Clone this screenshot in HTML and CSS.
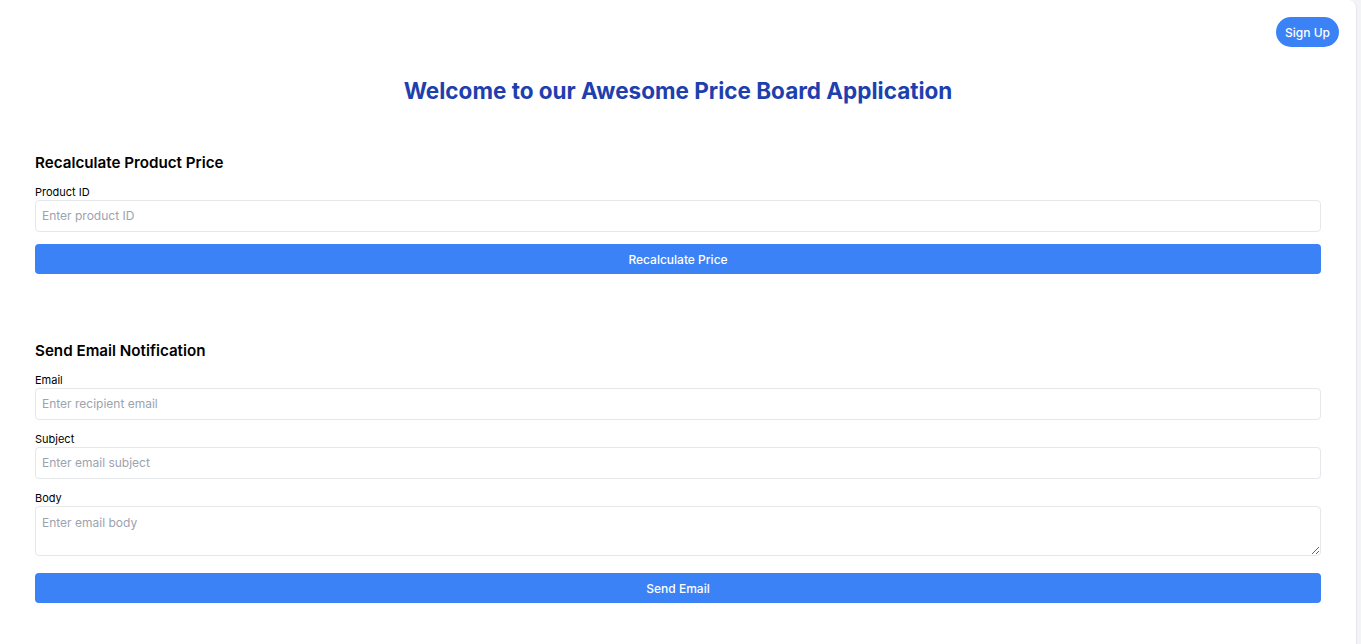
FILE: index.html
```html
<!DOCTYPE html>
<html>
<head>
<meta charset="utf-8">
<link rel="stylesheet" href="styles.css">
</head>
<body>
<div class="page">
  <header class="topbar">
    <button class="signup">Sign Up</button>
  </header>
  <h1 class="title">Welcome to our Awesome Price Board Application</h1>
  <section class="section first">
    <h2 class="heading">Recalculate Product Price</h2>
    <div class="field">
      <label class="label">Product ID</label>
      <input class="input" type="text" placeholder="Enter product ID">
    </div>
    <button class="btn">Recalculate Price</button>
  </section>
  <section class="section second">
    <h2 class="heading">Send Email Notification</h2>
    <div class="field">
      <label class="label">Email</label>
      <input class="input" type="text" placeholder="Enter recipient email">
    </div>
    <div class="field">
      <label class="label">Subject</label>
      <input class="input" type="text" placeholder="Enter email subject">
    </div>
    <div class="field last">
      <label class="label">Body</label>
      <textarea class="input textarea" placeholder="Enter email body"></textarea>
    </div>
    <button class="btn">Send Email</button>
  </section>
</div>
</body>
</html>
```
FILE: styles.css
```css
* { box-sizing: border-box; }
html, body { margin: 0; padding: 0; }
body {
  background: #f3f4f6;
  font-family: Inter, "Noto Sans", sans-serif;
  color: #000;
  height: 644px;
  overflow: hidden;
}
.page {
  width: 1357px;
  min-height: 644px;
  background: #fff;
  border-right: 1px solid #e5e7eb;
  border-top-right-radius: 8px;
  padding: 17px 35px 40px;
}
.topbar {
  display: flex;
  justify-content: flex-end;
  margin-right: -18px;
}
.signup {
  height: 30px;
  padding: 0 9px;
  border: none;
  border-radius: 15px;
  background: #3b82f6;
  color: #fff;
  font-family: Inter, sans-serif;
  font-size: 12px;
  font-weight: 500;
}
.title {
  margin: 29px 0 0;
  text-align: center;
  font-size: 22.5px;
  font-weight: 700;
  color: #1e40af;
  line-height: 30px;
}
.heading {
  margin: 0 0 10px;
  font-size: 15.2px;
  font-weight: 600;
  line-height: 24px;
}
.section.first { margin-top: 45px; }
.section.second { margin-top: 65px; }
.field { display: flex; flex-direction: column; margin-bottom: 12px; }
.field.last { margin-bottom: 17px; }
.label {
  font-size: 11px;
  line-height: 14px;
  margin-bottom: 1px;
}
.input {
  height: 32px;
  border: 1px solid #e5e7eb;
  border-radius: 4px;
  padding: 0 6px 1px;
  font-family: Inter, sans-serif;
  font-size: 12px;
  color: #111;
  outline: none;
}
.input::placeholder { color: #9ca3af; }
.textarea {
  height: 50px;
  padding-top: 8px;
  resize: vertical;
}
.btn {
  display: block;
  width: 100%;
  height: 30px;
  border: none;
  border-radius: 4px;
  background: #3b82f6;
  color: #fff;
  font-family: Inter, sans-serif;
  font-size: 12px;
  font-weight: 500;
}
```
